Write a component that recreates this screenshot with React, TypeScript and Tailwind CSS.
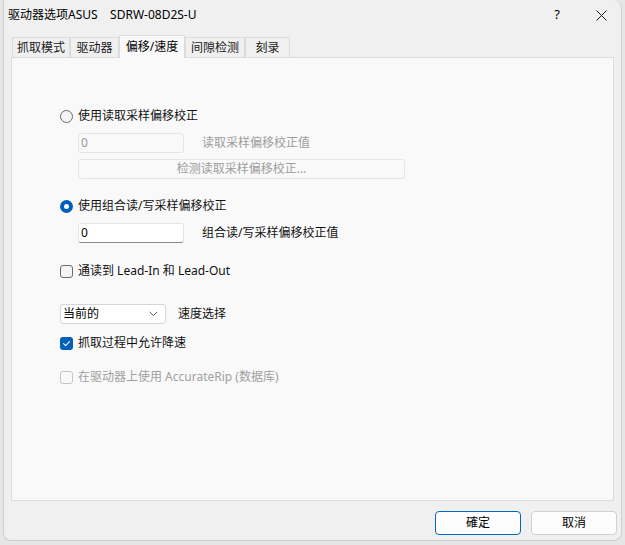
import React, { useState } from 'react'

const font = { fontFamily: '"Noto Sans", "Noto Sans CJK SC", sans-serif' }

function Radio({ checked, label }: { checked: boolean; label: string }) {
  return (
    <div className="flex items-center h-5">
      {checked ? (
        <span className="w-[13px] h-[13px] rounded-full bg-[#005fb8] flex items-center justify-center">
          <span className="w-[5px] h-[5px] rounded-full bg-white" />
        </span>
      ) : (
        <span className="w-[13px] h-[13px] rounded-full border border-[#6a6a6a] bg-[#f5f5f5]" />
      )}
      <span className="ml-[5px] text-[12px] text-[#111]">{label}</span>
    </div>
  )
}

function Check({ checked, disabled, label }: { checked?: boolean; disabled?: boolean; label: string }) {
  return (
    <div className="flex items-center h-5">
      {checked ? (
        <span className="w-[13px] h-[13px] rounded-[3px] bg-[#005fb8] flex items-center justify-center">
          <svg width="9" height="9" viewBox="0 0 10 10" fill="none">
            <path d="M1.8 5.2 L4 7.3 L8.3 2.8" stroke="white" strokeWidth="1.2" strokeLinecap="round" strokeLinejoin="round" />
          </svg>
        </span>
      ) : (
        <span
          className={
            disabled
              ? 'w-[13px] h-[13px] rounded-[3px] border border-[#c5c5c5] bg-[#f9f9f9]'
              : 'w-[13px] h-[13px] rounded-[3px] border border-[#6a6a6a] bg-[#f5f5f5]'
          }
        />
      )}
      <span className={disabled ? 'ml-[5px] text-[12px] text-[#a0a0a0]' : 'ml-[5px] text-[12px] text-[#111]'}>{label}</span>
    </div>
  )
}

const tabs = ['抓取模式', '驱动器', '偏移/速度', '间隙检测', '刻录']
const tabWidths = ['w-[58px]', 'w-[49px]', 'w-[66px]', 'w-[60px]', 'w-[45px]']

export default function App() {
  const [active] = useState(2)

  return (
    <div className="w-[625px] h-[545px] bg-[#e6e6e6] pl-[3px] pr-[3px] pb-[4px]" style={font}>
      <div className="w-full h-full bg-[#f0f0f0] border-l border-r border-b border-[#cfcfcf] rounded-bl-[8px] rounded-br-[8px] rounded-tr-[8px] flex flex-col">
        {/* title bar */}
        <div className="h-[30px] flex items-center pl-[4px] shrink-0">
          <span className="text-[12px] text-black whitespace-pre">驱动器选项ASUS    SDRW-08D2S-U</span>
          <div className="ml-auto flex items-center">
            <span className="w-[48px] text-center text-[13px] text-black">?</span>
            <span className="w-[40px] flex justify-center">
              <svg width="11" height="11" viewBox="0 0 11 11">
                <path d="M0.5 0.5 L10.5 10.5 M10.5 0.5 L0.5 10.5" stroke="#1a1a1a" strokeWidth="1" />
              </svg>
            </span>
          </div>
        </div>

        {/* tabs */}
        <div className="px-[7px] mt-[5px] flex flex-col flex-1">
          <div className="flex items-end h-[22px] pl-px">
            {tabs.map((t, i) =>
              i === active ? (
                <div
                  key={t}
                  className={`${tabWidths[i]} h-[23px] -mb-px bg-[#f9f9f9] border-t border-l border-r border-[#dcdcdc] flex items-center justify-center text-[12px] text-black relative z-10`}
                >
                  {t}
                </div>
              ) : (
                <div
                  key={t}
                  className={`${tabWidths[i]} h-[20px] bg-[#f0f0f0] border-t border-l border-r border-[#dcdcdc] flex items-center justify-center text-[12px] text-[#1a1a1a]`}
                >
                  {t}
                </div>
              )
            )}
          </div>

          {/* panel */}
          <div className="h-[444px] bg-[#f9f9f9] border border-[#dcdcdc] pl-[48px] pt-[48px] flex flex-col">
            <Radio checked={false} label="使用读取采样偏移校正" />
            <div className="pl-[18px] mt-[7px] flex items-center">
              <div className="w-[106px] h-[20px] border border-[#e5e5e5] rounded-[3px] bg-[#f9f9f9] text-[12px] text-[#9a9a9a] flex items-center pl-[2px]">
                0
              </div>
              <span className="ml-[18px] text-[12px] text-[#9d9d9d]">读取采样偏移校正值</span>
            </div>
            <div className="pl-[18px] mt-[6px]">
              <div className="w-[327px] h-[20px] border border-[#e5e5e5] rounded-[3px] bg-[#f9f9f9] text-[12px] text-[#9d9d9d] flex items-center justify-center">
                检测读取采样偏移校正...
              </div>
            </div>

            <div className="mt-[17px]">
              <Radio checked label="使用组合读/写采样偏移校正" />
            </div>
            <div className="pl-[18px] mt-[7px] flex items-center">
              <div className="w-[106px] h-[20px] border border-[#e5e5e5] border-b-[#8a8a8a] rounded-[3px] bg-white text-[12px] text-black flex items-center pl-[2px]">
                0
              </div>
              <span className="ml-[18px] text-[12px] text-[#111]">组合读/写采样偏移校正值</span>
            </div>

            <div className="mt-[18px]">
              <Check label="通读到 Lead-In 和 Lead-Out" />
            </div>

            <div className="mt-[23px] flex items-center">
              <div className="w-[106px] h-[20px] border border-[#d5d5d5] rounded-[3px] bg-white flex items-center pl-[2px] pr-[7px]">
                <span className="text-[12px] text-black">当前的</span>
                <svg className="ml-auto" width="9" height="6" viewBox="0 0 9 6">
                  <path d="M0.7 0.8 L4.5 4.6 L8.3 0.8" stroke="#5a5a5a" strokeWidth="1" fill="none" />
                </svg>
              </div>
              <span className="ml-[12px] text-[12px] text-[#111]">速度选择</span>
            </div>

            <div className="mt-[9px]">
              <Check checked label="抓取过程中允许降速" />
            </div>
            <div className="mt-[14px]">
              <Check disabled label="在驱动器上使用 AccurateRip (数据库)" />
            </div>
          </div>

          {/* buttons */}
          <div className="flex justify-end mt-[10px] -mr-[3px] gap-[10px]">
            <button className="w-[86px] h-[24px] rounded-[4px] border border-[#0067c0] bg-[#fdfdfd] text-[12px] text-black">
              確定
            </button>
            <button className="w-[86px] h-[24px] rounded-[4px] border border-[#d0d0d0] bg-[#fdfdfd] text-[12px] text-black">
              取消
            </button>
          </div>
        </div>
      </div>
    </div>
  )
}
